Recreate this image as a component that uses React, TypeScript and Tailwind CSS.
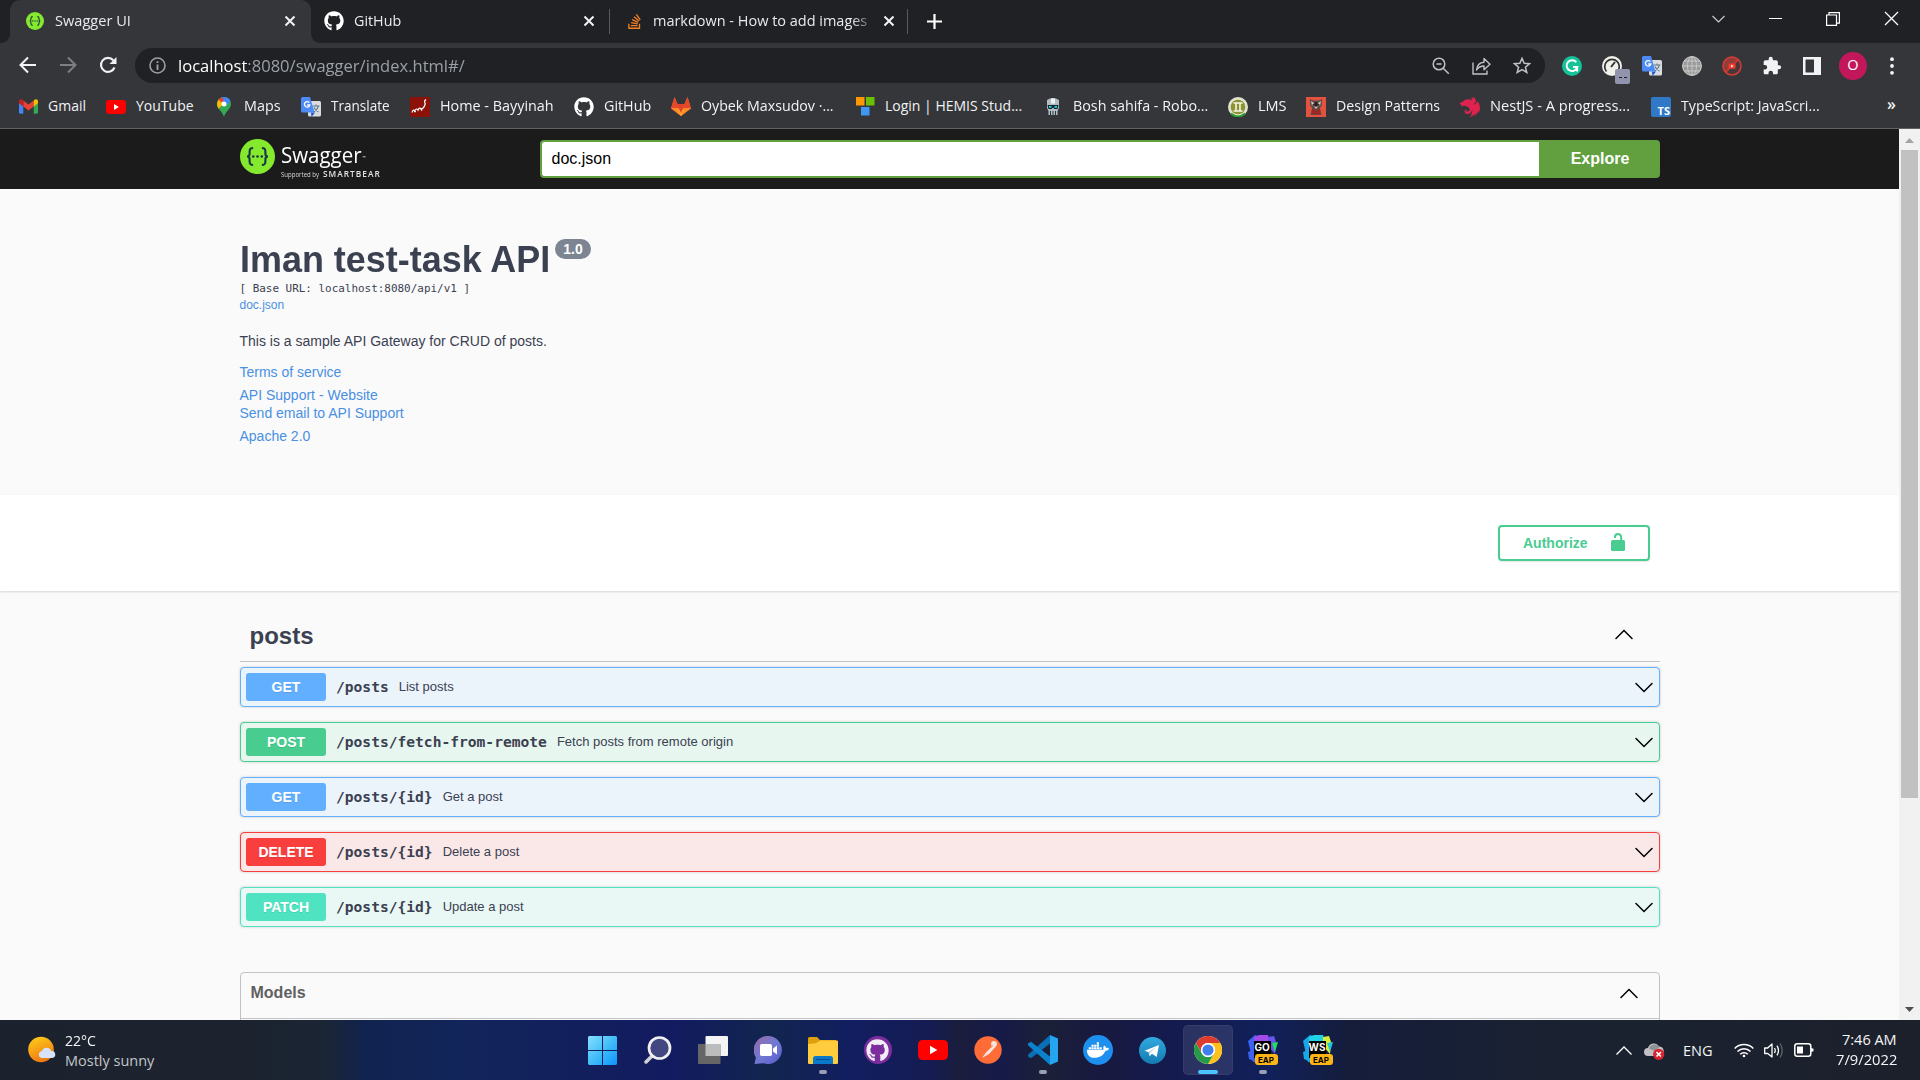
import React, { useLayoutEffect, useRef, useState } from "react";
import { FaGithub, FaStackOverflow, FaDocker } from "react-icons/fa";
import { SiNestjs } from "react-icons/si";

const UI = "font-['Open_Sans','Noto_Sans',sans-serif]";

/** Single-line label that is condensed or widened to fill a given width. */
function Fit({ w, className = "", children }: { w: number; className?: string; children: React.ReactNode }) {
  const ref = useRef<HTMLSpanElement>(null);
  const [scale, setScale] = useState(1);
  useLayoutEffect(() => {
    if (ref.current) setScale(w / ref.current.offsetWidth);
  }, [w]);
  return (
    <span className="block shrink-0 whitespace-nowrap" style={{ width: w }}>
      <span ref={ref} className={`inline-block origin-left whitespace-nowrap ${className}`} style={{ transform: `scaleX(${scale})` }}>
        {children}
      </span>
    </span>
  );
}

const SwaggerMark = ({ size }: { size: number }) => (
  <svg width={size} height={size} viewBox="0 0 36 36" className="shrink-0">
    <circle cx="18" cy="18" r="18" fill="#85ea2d" />
    <g fill="none" stroke="#173647" strokeWidth="2.2">
      <path d="M13.500 9.300c-3 0-3.600 1-3.600 3.500 0 3 .3 5.200-2.700 5.200 3 0 2.700 2.200 2.700 5.200 0 2.500.6 3.500 3.600 3.500" />
      <path d="M22.500 9.300c3 0 3.600 1 3.600 3.500 0 3-.3 5.200 2.700 5.200-3 0-2.700 2.200-2.700 5.200 0 2.500-.6 3.500-3.600 3.500" />
    </g>
    <g fill="#173647">
      <circle cx="13.600" cy="18" r="1.300" />
      <circle cx="18" cy="18" r="1.300" />
      <circle cx="22.400" cy="18" r="1.300" />
    </g>
  </svg>
);

const TabClose = () => (
  <svg width="12" height="12" viewBox="0 0 12 12" stroke="#f1f3f4" strokeWidth="2">
    <path d="M1.500 1.500l9 9M10.500 1.500l-9 9" />
  </svg>
);

const YouTubeMark = ({ w, h }: { w: number; h: number }) => (
  <svg width={w} height={h} viewBox="0 0 30 20" preserveAspectRatio="none">
    <rect width="30" height="20" rx="4.500" fill="#f00" />
    <path d="M12 5.800v8.400l7.300-4.200z" fill="#fff" />
  </svg>
);

const TranslateMark = () => (
  <svg width="20" height="20" viewBox="0 0 20 20">
    <rect x="7" y="4" width="13" height="15.500" rx="1.500" fill="#dadce0" />
    <path d="M11.500 9h7M15 7.500V9m2.300 0c-.5 2.500-2 4.500-4.300 5.700M13 10.500c.8 2 2.500 3.500 4.500 4.500" stroke="#607988" strokeWidth="1.100" fill="none" />
    <path d="M10 15.500h4L10.500 20z" fill="#1a56c4" />
    <path d="M1.500 0H9l4.500 15.500h-12A1.500 1.500 0 0 1 0 14V1.500A1.500 1.500 0 0 1 1.500 0z" fill="#4c8bf5" />
    <path d="M8.300 5.700A2.700 2.700 0 1 0 8.800 8H6.200" stroke="#fff" strokeWidth="1.300" fill="none" />
  </svg>
);

const bookmarks: { label: string; slot: string; w: number; icon: React.ReactNode }[] = [
  {
    label: "Gmail", slot: "w-[88px]", w: 38,
    icon: (
      <svg width="19" height="15" viewBox="0 0 20 15">
        <path d="M0 2v11.500A1.500 1.500 0 0 0 1.500 15H4.500V5z" fill="#4285f4" />
        <path d="M15.500 5v10h3a1.500 1.500 0 0 0 1.500-1.500V2z" fill="#34a853" />
        <path d="M4.500 1.200v6.300L10 11.700l5.500-4.200V1.200L10 5.400z" fill="#ea4335" />
        <path d="M15.500 1.200v6.300L20 4V2c0-1.900-2.100-2.800-3.600-1.600z" fill="#fbbc04" />
        <path d="M4.500 1.200v6.300L0 4V2C0 .1 2.100-.8 3.600.4z" fill="#c5221f" />
      </svg>
    ),
  },
  { label: "YouTube", slot: "w-[108px]", w: 58, icon: <YouTubeMark w={20} h={14} /> },
  {
    label: "Maps", slot: "w-[87px]", w: 37,
    icon: (
      <svg width="14" height="20" viewBox="0 0 14 20">
        <path d="M7 0C3.100 0 0 3.100 0 7c0 5 5.500 7.500 7 13 1.500-5.500 7-8 7-13 0-3.900-3.100-7-7-7z" fill="#34a853" />
        <path d="M0 7c0 1.900.8 3.400 1.800 4.800L8 4.500 2 2.200A6.900 6.900 0 0 0 0 7z" fill="#fbbc04" />
        <path d="M9.800.6A7 7 0 0 1 13.400 4L8 9.500 4.800 5.500z" fill="#4285f4" />
        <path d="M4.500.5A7 7 0 0 1 13.300 4L10 7 4 3z" fill="#4285f4" />
        <path d="M1.500 2.600A7 7 0 0 1 4.800.4L7 3 4.200 5.600z" fill="#ea4335" />
        <circle cx="7" cy="7" r="2.500" fill="#fff" />
      </svg>
    ),
  },
  { label: "Translate", slot: "w-[109px]", w: 59, icon: <TranslateMark /> },
  {
    label: "Home - Bayyinah", slot: "w-[164px]", w: 114,
    icon: (
      <svg width="20" height="20" viewBox="0 0 20 20">
        <rect width="20" height="20" fill="#8c1108" />
        <path d="M2 15.500c.8-3 2-3 2.500-1.500 1.500-2.500 2.500-2.500 3.500-.8 1-2.500 2-2.500 3-1 1.500-.2 3.200-2 4.200-5.200L14.500 4l1.500-1.500M11 12.200l1 1.500M5 14l.5 1.200" stroke="#fff" strokeWidth="1.200" fill="none" />
      </svg>
    ),
  },
  { label: "GitHub", slot: "w-[97px]", w: 47, icon: <FaGithub size={20} color="#fff" /> },
  {
    label: "Oybek Maxsudov ·...", slot: "w-[184px]", w: 133,
    icon: (
      <svg width="20" height="19" viewBox="0 0 20 19">
        <path d="M10 19L0 11.500 3.500 0l3 7h7l3-7L20 11.500z" fill="#fc6d26" />
        <path d="M3.500 0L0 11l10 8L6.500 7zM16.500 0L20 11l-10 8L13.500 7z" fill="#e5492b" />
        <path d="M0 11h20L10 19z" fill="#fc8a2a" />
        <path d="M6 13h8l-4 6z" fill="#fca326" />
        <path d="M6 7h8l-4 9z" fill="#e24329" />
      </svg>
    ),
  },
  {
    label: "Login | HEMIS Stud...", slot: "w-[188px]", w: 137,
    icon: (
      <svg width="19" height="19" viewBox="0 0 19 19">
        <rect width="8.500" height="8.500" fill="#ff9800" />
        <rect x="10" width="8.500" height="8.500" fill="#6cc004" />
        <rect x="5" y="10" width="8.500" height="8.500" fill="#4196f0" />
      </svg>
    ),
  },
  {
    label: "Bosh sahifa - Robo...", slot: "w-[185px]", w: 135,
    icon: (
      <svg width="14" height="18" viewBox="0 0 14 18">
        <path d="M1 2q6-4 12 0v8l-1.500 3v4h-9v-4L1 10z" fill="#b4bcc4" />
        <path d="M5 .5h4v5H5z" fill="#eef2f5" />
        <path d="M1.500 7h11l-1 4H8.500L7 9.500 5.500 11h-3z" fill="#13262c" />
        <path d="M3 8h2.500v1.800H3zM8.500 8H11v1.800H8.500z" fill="#18e0e6" />
        <path d="M4.500 13v4M7 13v4M9.500 13v4" stroke="#26343a" />
      </svg>
    ),
  },
  {
    label: "LMS", slot: "w-[78px]", w: 29,
    icon: (
      <svg width="20" height="20" viewBox="0 0 20 20">
        <circle cx="10" cy="10" r="10" fill="#e1e5d0" />
        <circle cx="10" cy="10" r="7.300" fill="#8d9333" />
        <path d="M3 16.500q7 6 14 0" stroke="#2d9a2d" strokeWidth="2" fill="none" />
        <path d="M5.500 6h9M5.500 14h9M8 6v8M12 6v8" stroke="#f6f6e8" strokeWidth="1.600" />
      </svg>
    ),
  },
  {
    label: "Design Patterns", slot: "w-[154px]", w: 104,
    icon: (
      <svg width="20" height="20" viewBox="0 0 20 20">
        <rect width="20" height="20" fill="#e4523f" />
        <path d="M4 2l3 1.500h6L16 2v6l-2 3 1.500 7h-11L6 11 4 8z" fill="#5a4a48" />
        <path d="M5 4l3 2-2 3zM15 4l-3 2 2 3zM8 9.500h4L10 12z" fill="#d8c8c0" />
        <path d="M9 5.500h2V9H9zM6.500 7.500h2M11.500 7.500h2" fill="#2a1f1e" stroke="#2a1f1e" strokeWidth=".8" />
        <path d="M6 12h2.500v5H6zM11.500 12H14v5h-2.500zM9 14h2v4H9z" fill="#a8231d" />
      </svg>
    ),
  },
  { label: "NestJS - A progress...", slot: "w-[191px]", w: 140, icon: <SiNestjs size={20} color="#e0234e" /> },
  {
    label: "TypeScript: JavaScri...", slot: "w-[170px]", w: 139,
    icon: (
      <span className="flex h-5 w-5 items-end justify-end rounded-[2px] bg-[#3178c6] pr-px font-['Open_Sans',sans-serif] text-[11px] leading-[13px] font-bold text-white">TS</span>
    ),
  },
];

function TabStrip() {
  return (
    <div className={`flex h-[43px] bg-[#202124] text-[14px] text-[#e8eaed] ${UI}`}>
      <div className="flex w-[10px] items-end bg-[#35363a]"><div className="h-full w-full rounded-br-[9px] bg-[#202124]" /></div>
      <div className="flex h-[43px] w-[301px] items-center rounded-t-[10px] bg-[#35363a] pb-px">
        <span className="ml-4"><SwaggerMark size={18} /></span>
        <span className="ml-[11px] pb-[2px]"><Fit w={76}>Swagger UI</Fit></span>
        <span className="ml-[153px]"><TabClose /></span>
      </div>
      <div className="flex w-[298px] bg-[#35363a]">
        <div className="flex w-full items-center rounded-bl-[9px] bg-[#202124] pb-px">
          <FaGithub size={20} color="#fff" className="ml-[13px]" />
          <span className="ml-[10px] pb-[2px]"><Fit w={47}>GitHub</Fit></span>
          <span className="ml-[182px]"><TabClose /></span>
        </div>
      </div>
      <div className="flex w-[299px] items-center pb-px">
        <span className="h-[25px] w-px bg-[#57595d]" />
        <FaStackOverflow size={17} color="#f48024" className="ml-[16px] shrink-0" />
        <span className="ml-[10px] w-[216px] shrink-0 pb-[2px] [mask-image:linear-gradient(to_right,black_92%,rgba(0,0,0,0.3))]"><Fit w={214}>markdown - How to add images</Fit></span>
        <span className="ml-[14px]"><TabClose /></span>
        <span className="ml-[12px] h-[25px] w-px bg-[#57595d]" />
      </div>
      <div className="flex flex-1 items-center justify-between pr-[21px] pb-px pl-[19px]">
        <svg width="15" height="15" viewBox="0 0 15 15" stroke="#fff" strokeWidth="2.200"><path d="M7.500 0v15M0 7.500h15" /></svg>
        <div className="flex items-center gap-[44px] pb-[5px]">
          <svg width="13" height="8" viewBox="0 0 13 8" fill="none" stroke="#cfd0d2" strokeWidth="1.100"><path d="M.5 1l6 6 6-6" /></svg>
          <svg width="13" height="13" viewBox="0 0 13 13" stroke="#fff"><path d="M0 6.500h13" /></svg>
          <svg width="14" height="14" viewBox="0 0 14 14" fill="none" stroke="#fff" strokeWidth="1.200"><path d="M.6 3h9.900v10.400H.6zM3 3V.6h10.400v10.500h-2.900" /></svg>
          <svg width="15" height="15" viewBox="0 0 15 15" stroke="#fff" strokeWidth="1.300"><path d="M1 1l13 13M14 1L1 14" /></svg>
        </div>
      </div>
    </div>
  );
}

function Toolbar() {
  return (
    <div className={`flex h-[45px] items-center bg-[#35363a] ${UI}`}>
      <div className="flex w-[135px] items-center gap-[22px] pb-px pl-[19px]">
        <svg width="18" height="18" viewBox="0 0 18 18" fill="none" stroke="#f1f3f4" strokeWidth="2"><path d="M17 9H2M9 1.500L1.500 9 9 16.500" /></svg>
        <svg width="18" height="18" viewBox="0 0 18 18" fill="none" stroke="#7d7f83" strokeWidth="2"><path d="M1 9h15M9 1.500L16.500 9 9 16.500" /></svg>
        <svg width="18" height="18" viewBox="0 0 18 18"><path d="M15.500 11.500a7 7 0 1 1-1.200-7.200" fill="none" stroke="#f1f3f4" strokeWidth="2.100" /><path d="M17.500 1v7h-7z" fill="#f1f3f4" /></svg>
      </div>
      <div className="flex h-[35px] w-[1410px] items-center rounded-full bg-[#202124] pl-[14px]">
        <svg width="17" height="17" viewBox="0 0 17 17" fill="none" stroke="#9aa0a6" strokeWidth="1.600"><circle cx="8.500" cy="8.500" r="7.500" /><path d="M8.500 7.500V13M8.500 4.200V6" strokeWidth="1.900" /></svg>
        <span className="ml-[12px] pt-px"><Fit w={287} className="text-[16.500px] text-[#9aa0a6]"><span className="text-white">localhost</span>:8080/swagger/index.html#/</Fit></span>
        <div className="ml-auto flex items-center gap-[22px] pr-[14px]">
          <svg width="18" height="18" viewBox="0 0 18 18" fill="none" stroke="#bdc1c6" strokeWidth="1.500"><circle cx="7" cy="7" r="5.800" /><path d="M11.200 11.200l5.600 5.600M4.500 7h5" /></svg>
          <svg width="19" height="19" viewBox="0 0 19 19" fill="none" stroke="#bdc1c6" strokeWidth="1.400"><path d="M1 6.500V18h14v-3.500" /><path d="M4.500 14C5 9.500 7.500 6.500 12 6.200V2.500l6 5.700-6 5.500V10c-3.500 0-5.500 1-7.500 4z" strokeLinejoin="round" /></svg>
          <svg width="18" height="19" viewBox="0 0 20 20" fill="none" stroke="#bdc1c6" strokeWidth="1.700"><path d="M10 2l2.400 5.500 6 .5-4.600 3.900 1.500 5.800L10 14.500l-5.300 3.200 1.500-5.800L1.600 8l6-.5z" /></svg>
        </div>
      </div>
      <div className="flex items-center gap-[20px] pl-[17px]">
        <svg width="20" height="20" viewBox="0 0 20 20"><circle cx="10" cy="10" r="10" fill="#15c39a" /><path d="M14.300 6.200A5.400 5.400 0 1 0 15.300 11H11M15.300 11l-.3 4.500" fill="none" stroke="#fff" strokeWidth="1.900" /></svg>
        <span className="relative block h-5 w-5">
          <svg width="20" height="20" viewBox="0 0 20 20"><circle cx="10" cy="10" r="10" fill="#f1f1ec" /><path d="M4.500 15.500a7.300 7.300 0 1 1 11 0" fill="none" stroke="#303030" strokeWidth="1.700" /><path d="M9 11l4-5" stroke="#303030" strokeWidth="2" /></svg>
          <span className="absolute top-[13px] left-[13px] flex h-[15px] w-[15px] items-center justify-center gap-[2px] rounded-[2px] bg-[#9194ac]"><i className="mt-[3px] h-px w-[3px] bg-[#1c1d26]" /><i className="mt-[3px] h-px w-[3px] bg-[#1c1d26]" /></span>
        </span>
        <TranslateMark />
        <svg width="20" height="20" viewBox="0 0 20 20"><circle cx="10" cy="10" r="9.800" fill="#999" /><g fill="none" stroke="#c8c8c8" strokeWidth="1"><circle cx="10" cy="10" r="9.300" /><ellipse cx="10" cy="10" rx="4.500" ry="9.500" /><path d="M10 0v20M0 10h20M2 5h16M2 15h16" /></g></svg>
        <svg width="20" height="20" viewBox="0 0 20 20"><circle cx="10" cy="10" r="9" fill="#4b3638" /><path d="M16.400 3.600A9 9 0 0 0 3.600 16.400z" fill="#963a37" /><circle cx="10" cy="10" r="9" fill="none" stroke="#d63c34" strokeWidth="1.500" /><path d="M16.500 3.500l-13 13" stroke="#d63c34" strokeWidth="1.300" /><rect x="6.500" y="7.500" width="7" height="5.200" rx="1.300" fill="#f23b2f" /><path d="M9.200 8.800v2.600l2.300-1.300z" fill="#fff" /></svg>
        <svg width="20" height="20" viewBox="0 0 24 24" fill="#f1f3f4"><path d="M20.500 11H19V7c0-1.100-.9-2-2-2h-4V3.500a2.500 2.500 0 0 0-5 0V5H4c-1.100 0-2 .9-2 2v3.800h1.500a2.700 2.700 0 0 1 0 5.400H2V20c0 1.100.9 2 2 2h3.800v-1.500a2.700 2.700 0 0 1 5.400 0V22H17c1.100 0 2-.9 2-2v-4h1.500a2.500 2.500 0 0 0 0-5z" /></svg>
        <svg width="20" height="20" viewBox="0 0 20 20"><path fillRule="evenodd" d="M1 1h18v18H1zM3.500 3.500v13H12v-13z" fill="#f1f3f4" /></svg>
        <span className="-ml-[3px] flex h-[28px] w-[28px] items-center justify-center rounded-full bg-[#c2185b] pb-px text-[14.500px] text-white">O</span>
        <svg width="4" height="18" viewBox="0 0 4 18" fill="#f1f3f4" className="ml-[3px]"><circle cx="2" cy="2.200" r="1.900" /><circle cx="2" cy="9" r="1.900" /><circle cx="2" cy="15.800" r="1.900" /></svg>
      </div>
    </div>
  );
}

function Bookmarks() {
  return (
    <div className={`flex h-[41px] items-center border-b border-[#606164] bg-[#35363a] pb-[3px] pl-[18px] text-[14px] text-[#f1f3f4] ${UI}`}>
      {bookmarks.map((b) => (
        <div key={b.label} className={`flex shrink-0 items-center gap-[10px] ${b.slot}`}>
          <span className="flex w-5 shrink-0 justify-center">{b.icon}</span>
          <span className="pb-[2px]"><Fit w={b.w}>{b.label}</Fit></span>
        </div>
      ))}
      <span className="ml-auto pr-[24px] pb-[6px] text-[16px] font-semibold">»</span>
    </div>
  );
}

const Chevron = ({ up = false }: { up?: boolean }) => (
  <svg width="18" height="11" viewBox="0 0 18 11" fill="none" stroke="#000" strokeWidth="1.500" strokeLinecap="round">
    <path d={up ? "M1 9.500l8-8 8 8" : "M1 1.500l8 8 8-8"} />
  </svg>
);

const operations = [
  { verb: "GET", path: "/posts", text: "List posts", box: "border-[#61affe] bg-[#ebf3fb]", tag: "bg-[#61affe]" },
  { verb: "POST", path: "/posts/fetch-from-remote", text: "Fetch posts from remote origin", box: "border-[#49cc90] bg-[#e8f6f0]", tag: "bg-[#49cc90]" },
  { verb: "GET", path: "/posts/{id}", text: "Get a post", box: "border-[#61affe] bg-[#ebf3fb]", tag: "bg-[#61affe]" },
  { verb: "DELETE", path: "/posts/{id}", text: "Delete a post", box: "border-[#f93e3e] bg-[#fae7e7]", tag: "bg-[#f93e3e]" },
  { verb: "PATCH", path: "/posts/{id}", text: "Update a post", box: "border-[#50e3c2] bg-[#e9f8f5]", tag: "bg-[#50e3c2]" },
];

function SwaggerPage() {
  return (
    <main className="flex h-full w-[1899px] flex-col overflow-hidden bg-[#fafafa] font-['Liberation_Sans',Arial,sans-serif] text-[#3b4151]">
      <header className="flex h-[60px] shrink-0 items-center bg-[#1b1b1b] pl-[239.500px]">
        <div className="flex h-[42px] w-[300.500px] gap-[6px] pt-px">
          <SwaggerMark size={35} />
          <div className={`flex flex-col text-white ${UI}`}>
            <div className="flex h-[28px] items-start gap-px text-[22.500px] leading-[32px]">
              <Fit w={81}>Swagger</Fit>
              <span className="mt-[15px] text-[4px] leading-[8px]">™</span>
            </div>
            <div className="flex items-center gap-[4px] pt-px text-[7px] leading-[12px]">
              <Fit w={38} className="text-[#d8d8d8]">Supported by</Fit>
              <Fit w={58} className="text-[8px] font-semibold tracking-[1px] text-[#e4e4e4]">SMARTBEAR</Fit>
            </div>
          </div>
        </div>
        <div className="flex h-[38px] w-[1120px]">
          <div className="flex w-[999px] items-center rounded-l-[4px] border-2 border-r-0 border-[#62a03f] bg-white pb-px pl-[9.500px] text-[16px] text-black">doc.json</div>
          <div className="flex flex-1 items-center justify-center rounded-r-[4px] bg-[#62a03f] pb-px pl-px text-[16px] font-bold text-white">Explore</div>
        </div>
      </header>

      <section className="flex h-[306px] shrink-0 flex-col pt-[50px] pl-[239.500px] text-[14px] leading-[20px] text-[#4990e2]">
        <div className="flex h-[40px] gap-[5px] text-[36px] leading-[42px] font-bold text-[#3b4151]">
          <Fit w={310.500}>Iman test-task API</Fit>
          <span className="flex h-[20px] w-[36px] items-center justify-center rounded-full bg-[#7d8492] text-[14px] leading-[20px] text-white">1.0</span>
        </div>
        <div className="mt-[2px] h-[15px] font-['DejaVu_Sans_Mono',monospace] text-[10.950px] leading-[16px] whitespace-pre text-[#3b4151]">[ Base URL: localhost:8080/api/v1 ]</div>
        <div className="text-[12px] leading-[18px]">doc.json</div>
        <div className="mt-[17px] text-[#3b4151]">This is a sample API Gateway for CRUD of posts.</div>
        <div className="mt-[11px]">Terms of service</div>
        <div className="mt-[4px] leading-[18px]">API Support - Website</div>
        <div className="leading-[18px]">Send email to API Support</div>
        <div className="mt-[4px]">Apache 2.0</div>
      </section>

      <section className="flex h-[96px] shrink-0 justify-end bg-white pt-[30px] pr-[249px] shadow-[0_1px_2px_0_rgba(0,0,0,0.15)]">
        <div className="flex h-[36px] w-[152px] items-center rounded-[4px] border-2 border-[#49cc90] pl-[23px] text-[14px] font-bold text-[#49cc90] shadow-[0_1px_2px_rgba(0,0,0,0.1)]">
          <Fit w={65}>Authorize</Fit>
          <svg width="14" height="18" viewBox="0 0 14 18" className="mb-[2px] ml-[23px]"><rect y="7" width="14" height="11" rx="1.500" fill="#49cc90" /><path d="M10.200 8V4.200a3.100 3.100 0 0 0-6.200 0V5" fill="none" stroke="#49cc90" strokeWidth="2" /></svg>
        </div>
      </section>

      <section className="ml-[239.500px] w-[1420px]">
        <div className="flex h-[71px] items-start justify-between border-b border-[#3b4151]/30 pt-[31px] pr-[27px] pl-[10px]">
          <h2 className="text-[24px] leading-[28px] font-bold">posts</h2>
          <span className="pt-[7px]"><Chevron up /></span>
        </div>
        <div className="mt-[5px] flex flex-col gap-[15px]">
          {operations.map((o, i) => (
            <div key={i} className={`flex h-[40px] items-center rounded-[4px] border pr-[6px] pl-[5.500px] shadow-[0_0_3px_rgba(0,0,0,0.19)] ${o.box}`}>
              <span className={`flex h-[28px] w-[80px] items-center justify-center rounded-[3px] text-[14px] font-bold text-white [text-shadow:0_1px_0_rgba(0,0,0,0.1)] ${o.tag}`}>{o.verb}</span>
              <span className="ml-[10px] pb-px font-['DejaVu_Sans_Mono',monospace] text-[14.600px] font-bold">{o.path}</span>
              <span className="ml-[10px] pb-px text-[13px]">{o.text}</span>
              <span className="ml-auto"><Chevron /></span>
            </div>
          ))}
        </div>
        <div className="mt-[45px] h-[100px] rounded-[4px] border border-[#3b4151]/30">
          <div className="flex h-[46px] items-center justify-between border-b border-[#3b4151]/30 pr-[21px] pb-[5px] pl-[10px] text-[16px] font-bold text-[#606060]">
            Models<Chevron up />
          </div>
        </div>
      </section>
    </main>
  );
}

function Scrollbar() {
  return (
    <div className="flex w-[21px] flex-col items-center bg-[#f1f1f1]">
      <div className="flex h-[21px] items-center pt-[2px]"><svg width="9" height="5" viewBox="0 0 9 5" fill="#a3a3a3"><path d="M4.500 0L9 5H0z" /></svg></div>
      <div className="h-[648px] w-[17px] bg-[#c1c1c1]" />
      <div className="mt-auto flex h-[21px] items-center"><svg width="9" height="5" viewBox="0 0 9 5" fill="#505050"><path d="M4.500 5L9 0H0z" /></svg></div>
    </div>
  );
}

const JetBrains = ({ text, a, b, c, d }: { text: string; a: string; b: string; c: string; d: string }) => (
  <span className="relative block h-[30px] w-[30px]">
    <svg width="30" height="30" viewBox="0 0 30 30">
      <path d="M0 6L7 0l9 3-3 25-8-1z" fill={a} />
      <path d="M6 2l5-2h9l2 8-16 4z" fill={b} />
      <path d="M20 2l6-1 2 6-1 12-7-8z" fill={c} />
      <path d="M24 8l6-1-3 10z" fill={d} />
      <path d="M0 17l8-3 2 14-9-4z" fill={a} />
    </svg>
    <span className="absolute top-[6px] left-[6px] flex h-[17px] w-[17px] items-start justify-center bg-black pt-px font-['Inter',sans-serif] text-[10px] leading-[10px] font-bold text-white">{text}</span>
    <span className="absolute top-[19px] left-[7px] flex h-[11px] w-[23px] items-center justify-center rounded-[3px] bg-[#fdb515] font-['Inter',sans-serif] text-[8px] leading-none font-bold text-black">EAP</span>
  </span>
);

const taskIcons: { icon: React.ReactNode; state?: "open" | "active" }[] = [
  {
    icon: (
      <svg width="29" height="29" viewBox="0 0 29 29">
        <defs><linearGradient id="win" gradientUnits="userSpaceOnUse" x1="0" y1="0" x2="29" y2="29"><stop stopColor="#86e0ff" /><stop offset=".5" stopColor="#43bdf8" /><stop offset="1" stopColor="#0a93ff" /></linearGradient></defs>
        <path d="M1 0h13v14H0V1zM15 0h13l1 1v13H15zM0 15h14v14H1l-1-1zM15 15h14v13l-1 1H15z" fill="url(#win)" />
      </svg>
    ),
  },
  { icon: <svg width="28" height="28" viewBox="0 0 28 28"><path d="M8.500 19.500L2 26" stroke="#cfd3d6" strokeWidth="3.500" strokeLinecap="round" /><circle cx="15.500" cy="12" r="10.500" fill="#424781" stroke="#f0f0f0" strokeWidth="2.700" /></svg> },
  { icon: <svg width="30" height="28" viewBox="0 0 30 28"><rect x="7.500" width="22.500" height="20" rx="1" fill="#f4f4f4" /><rect y="8" width="22.500" height="20" rx="1" fill="#666" /><path d="M7.500 8h15v12h-15z" fill="#bcbcbc" /></svg> },
  {
    icon: (
      <svg width="28" height="28" viewBox="0 0 28 28">
        <defs><linearGradient id="chat" x2="1" y2="1"><stop stopColor="#9a69a6" /><stop offset=".5" stopColor="#7079d0" /><stop offset="1" stopColor="#5a5cd0" /></linearGradient></defs>
        <path d="M14 0a14 14 0 1 1-4.500 27.300L.500 28l1.400-6.500A14 14 0 0 1 14 0z" fill="url(#chat)" />
        <rect x="6" y="8" width="12" height="12" rx="1.800" fill="#fff" /><path d="M19 12.500l4-3v9l-4-3z" fill="#fff" />
      </svg>
    ),
  },
  { state: "open", icon: <svg width="30" height="27" viewBox="0 0 30 27"><path d="M0 1.500Q0 0 1.500 0H9l3 3h16v5H0z" fill="#e0a00e" /><path d="M0 7q9 0 12-3.500h17q1 0 1 1V26q0 1-1 1H1q-1 0-1-1z" fill="#ffcc3d" /><path d="M5 27v-5.500q0-2.500 2.500-2.500h15q2.500 0 2.500 2.500V27z" fill="#0b78cc" /><path d="M8 22.500h14" stroke="#064d8a" /></svg> },
  { icon: <span className="flex h-[28px] w-[28px] items-center justify-center rounded-full bg-[#7c2d9d]"><FaGithub size={23} color="#f2eef5" /></span> },
  { icon: <YouTubeMark w={30} h={20} /> },
  { icon: <svg width="28" height="28" viewBox="0 0 28 28"><circle cx="14" cy="14" r="13.700" fill="#ff6c37" /><path d="M20 8l-8 8.500-4 5.500 7-4 6.500-7z" fill="#f6e6df" /><circle cx="20" cy="8" r="2.900" fill="#f6e6df" /><path d="M12 15.500l7-6" stroke="#ff6c37" strokeWidth=".8" /></svg> },
  { state: "open", icon: <svg width="30" height="30" viewBox="0 0 30 30"><path d="M22 0v8.500L3 23.300 0 21.500v-1.700z" fill="#0a6fb4" /><path d="M22 30v-8.500L3 6.700 0 8.500v1.700z" fill="#0d82cc" /><path d="M22 0l8 3.500v23L22 30z" fill="#24a5f0" /></svg> },
  { icon: <span className="flex h-[30px] w-[30px] items-center justify-center rounded-full bg-[#1d8fee]"><FaDocker size={22} color="#fff" /></span> },
  { icon: <svg width="27" height="27" viewBox="0 0 27 27"><defs><linearGradient id="tg" x2="0" y2="1"><stop stopColor="#32a9df" /><stop offset="1" stopColor="#147bb2" /></linearGradient></defs><circle cx="13.500" cy="13.500" r="13.500" fill="url(#tg)" /><path d="M5.500 13.700L20 8l-2.300 12-4.700-3.300-2.500 2.500-.7-4z" fill="#fff" /><path d="M9.500 15l7.500-5-6 6-.5 3z" fill="#b8d6e8" /></svg> },
  {
    state: "active",
    icon: (
      <svg width="28" height="28" viewBox="0 0 48 48">
        <circle cx="24" cy="24" r="24" fill="#fff" />
        <path d="M24 12h20.800A24 24 0 0 0 3.200 12l10.400 18A12 12 0 0 1 24 12z" fill="#dc3b2e" />
        <path d="M34.400 30L24 48A24 24 0 0 0 44.800 12H24a12 12 0 0 1 10.400 18z" fill="#fcc21b" />
        <path d="M13.600 30L3.200 12A24 24 0 0 0 24 48l10.400-18a12 12 0 0 1-20.800 0z" fill="#279a48" />
        <circle cx="24" cy="24" r="12" fill="#fff" /><circle cx="24" cy="24" r="9.500" fill="#3f7fee" />
      </svg>
    ),
  },
  { state: "open", icon: <JetBrains text="GO" a="#3d62f0" b="#a24be8" c="#6a55ea" d="#1ee05a" /> },
  { icon: <JetBrains text="WS" a="#18a8ea" b="#20d3e6" c="#d8ee3c" d="#22c8d8" /> },
];

function Taskbar() {
  return (
    <footer className={`flex h-[60px] items-center bg-[linear-gradient(90deg,#1c222d_0px,#1c232f_250px,#1a2535_325px,#112350_368px,#12255a_460px,#12205c_560px,#121b60_670px,#12254e_770px,#121e60_850px,#151c52_930px,#1a1d3c_960px,#161a48_1000px,#1b2038_1045px,#18193f_1100px,#141b50_1180px,#11205a_1270px,#151d3b_1350px,#1a2231_1560px,#1c202b_1920px)] text-[#f4f5f6] ${UI}`}>
      <div className="flex w-[575px] items-center pl-[28px]">
        <svg width="28" height="28" viewBox="0 0 28 28">
          <defs><linearGradient id="sun" x2=".4" y2="1"><stop stopColor="#ffd21a" /><stop offset="1" stopColor="#f07a12" /></linearGradient></defs>
          <circle cx="13" cy="13.500" r="12.800" fill="url(#sun)" />
          <path d="M13.500 22a3.400 3.400 0 0 1 .3-6.700 5 5 0 0 1 9.400-.3 3.500 3.500 0 0 1 1 7z" fill="#d5e2f8" />
        </svg>
        <div className="ml-[9px] flex flex-col pt-px text-[14.500px] leading-[20px]">
          <Fit w={31}>22°C</Fit>
          <Fit w={89} className="text-[#c3c6ca]">Mostly sunny</Fit>
        </div>
      </div>
      {taskIcons.map((t, i) => (
        <div key={i} className="flex h-full w-[55px] shrink-0 items-center justify-center">
          <div className={`relative flex h-[50px] w-[50px] items-center justify-center rounded-[5px] ${t.state === "active" ? "border border-white/5 bg-white/10" : ""}`}>
            {t.icon}
            {t.state === "open" && <span className="absolute bottom-px left-[21px] h-[4px] w-[8px] rounded-full bg-[#9a9fb5]" />}
            {t.state === "active" && <span className="absolute bottom-0 left-[14px] h-[4px] w-[20px] rounded-full bg-[#4cc2ff]" />}
          </div>
        </div>
      ))}
      <div className="flex flex-1 items-center pl-[271px]">
        <svg width="16" height="9" viewBox="0 0 16 9" fill="none" stroke="#fff" strokeWidth="1.300"><path d="M.5 8.500L8 1l7.500 7.500" /></svg>
        <svg width="21" height="18" viewBox="0 0 21 18" className="mt-px ml-[12px]">
          <path d="M4 14a4 4 0 0 1 0-8A6 6 0 0 1 15 4.500a5 5 0 0 1 2 9.500z" fill="#bfc1c4" /><path d="M5 6.500a6 6 0 0 1 10.500-1.500l-5 4z" fill="#8f9296" />
          <circle cx="14.700" cy="12.300" r="5.600" fill="#d9232e" /><path d="M12.500 10.100l4.400 4.400m0-4.400l-4.400 4.400" stroke="#fff" strokeWidth="1.500" />
        </svg>
        <span className="ml-[18px]"><Fit w={30} className="text-[14.500px] leading-[20px]">ENG</Fit></span>
        <svg width="20" height="15" viewBox="0 0 20 15" fill="none" stroke="#fff" strokeWidth="1.500" className="ml-[21px]"><path d="M.7 5.500a13 13 0 0 1 18.600 0M3.500 8.500a9 9 0 0 1 13 0M6.200 11.300a5.300 5.300 0 0 1 7.600 0" /><circle cx="10" cy="13" r="1.300" fill="#fff" stroke="none" /></svg>
        <svg width="20" height="17" viewBox="0 0 20 17" fill="none" stroke="#fff" strokeWidth="1.300" className="ml-[10px]"><path d="M.7 6h3l4.300-4v13L3.700 11.500h-3z" strokeLinejoin="round" /><path d="M10.500 6q1.500 2.500 0 5M13 3.700q3 4.800 0 9.600" /><path d="M16 1.500q4.500 7 0 14" stroke="#60646c" /></svg>
        <svg width="20" height="14" viewBox="0 0 20 14" className="ml-[10px]"><rect x=".8" y=".8" width="16" height="12.400" rx="2.500" fill="none" stroke="#fff" strokeWidth="1.500" /><rect x="3" y="3.500" width="6" height="7" fill="#fff" /><path d="M17 5l2.500.8v2.400L17 9z" fill="#fff" /></svg>
        <div className="ml-[22px] flex flex-col items-end text-[14.500px] leading-[20px]">
          <Fit w={55}>7:46 AM</Fit>
          <Fit w={61}>7/9/2022</Fit>
        </div>
      </div>
    </footer>
  );
}

export default function App() {
  return (
    <div className="flex h-[1080px] w-[1920px] flex-col overflow-hidden">
      <TabStrip />
      <Toolbar />
      <Bookmarks />
      <div className="flex h-[891px] overflow-hidden"><SwaggerPage /><Scrollbar /></div>
      <Taskbar />
    </div>
  );
}
